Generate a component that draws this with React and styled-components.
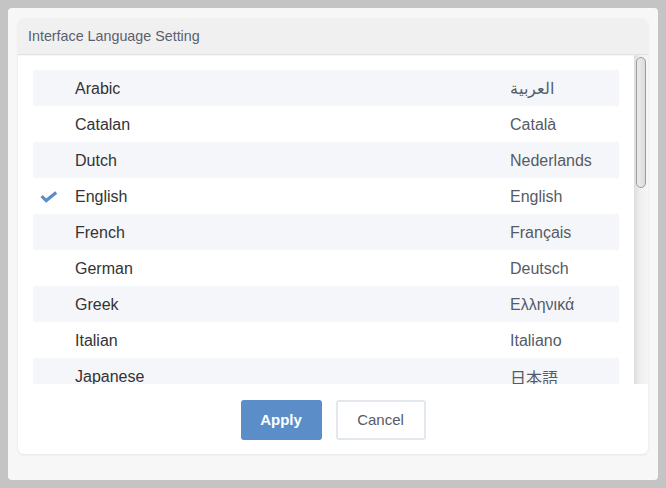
import React from "react";
import styled, { createGlobalStyle } from "styled-components";

const Global = createGlobalStyle`
  html, body { margin: 0; padding: 0; background: #c4c4c4; }
  body { font-family: "Liberation Sans", Arial, "Noto Sans CJK JP", sans-serif; }
  * { box-sizing: border-box; }
`;

const Panel = styled.div`
  margin: 8px;
  width: 650px;
  height: 472px;
  background: #f7f7f7;
  border-radius: 4px;
  padding: 10px 10px 0 10px;
`;

const Card = styled.div`
  background: #fff;
  border-radius: 6px;
  height: 436px;
  box-shadow: 0 1px 3px rgba(0, 0, 0, 0.08);
  display: flex;
  flex-direction: column;
  overflow: hidden;
`;

const Header = styled.div`
  height: 37px;
  flex: none;
  background: #f0f0f0;
  border-bottom: 1px solid #e0e4e9;
  box-shadow: 0 1px 1px rgba(0, 0, 0, 0.03);
  display: flex;
  align-items: center;
  padding-left: 10px;
  font-size: 14.3px;
  color: #5b606e;
  border-radius: 6px 6px 0 0;
`;

const ListArea = styled.div`
  height: 329px;
  flex: none;
  display: flex;
`;

const List = styled.div`
  flex: 1;
  overflow-y: auto;
  scrollbar-width: none;
  padding: 15px 15px 15px 15px;
  &::-webkit-scrollbar { display: none; }
`;

const ScrollTrack = styled.div`
  width: 14px;
  flex: none;
  padding: 2px;
  background: linear-gradient(to right, #dcdcdc, #eeeeee 40%, #f6f6f6);
`;

const ScrollThumb = styled.div`
  width: 100%;
  border: 1px solid #9c9c9c;
  border-radius: 6px;
  background: linear-gradient(to right, #ececec, #dcdcdc);
`;

const Row = styled.div`
  display: grid;
  grid-template-columns: 42px 1fr 109px;
  align-items: center;
  height: 36px;
  padding-top: 1px;
  font-size: 16px;
  background: ${(p) => (p.$alt ? "#f5f6fa" : "#fff")};
`;

const CheckCell = styled.div`
  display: flex;
  align-items: center;
  padding-left: 7px;
  height: 100%;
`;

const Name = styled.div`
  color: #333;
`;

const Native = styled.div`
  color: #555b66;
`;

const Footer = styled.div`
  flex: 1;
  display: flex;
  justify-content: center;
  align-items: flex-start;
  gap: 14px;
  padding-top: 16px;
`;

const Button = styled.button`
  height: 40px;
  font-family: inherit;
  font-size: 15px;
  border-radius: 3px;
  cursor: pointer;
  padding: 0 0 1px;
  width: ${(p) => (p.$primary ? "81px" : "90px")};
  background: ${(p) => (p.$primary ? "#5b8ec9" : "#fff")};
  color: ${(p) => (p.$primary ? "#fff" : "#555b66")};
  font-weight: ${(p) => (p.$primary ? 700 : 400)};
  border: ${(p) => (p.$primary ? "none" : "2px solid #e3e8ee")};
`;

const languages = [
  ["Arabic", "العربية"],
  ["Catalan", "Català"],
  ["Dutch", "Nederlands"],
  ["English", "English"],
  ["French", "Français"],
  ["German", "Deutsch"],
  ["Greek", "Ελληνικά"],
  ["Italian", "Italiano"],
  ["Japanese", "日本語"],
  ["Korean", "한국어"],
  ["Norwegian", "Norsk"],
  ["Polish", "Polski"],
  ["Portuguese", "Português"],
  ["Russian", "Русский"],
  ["Simplified Chinese", "简体中文"],
  ["Slovak", "Slovenčina"],
  ["Spanish", "Español"],
  ["Swedish", "Svenska"],
  ["Traditional Chinese", "繁體中文"],
  ["Turkish", "Türkçe"],
  ["Ukrainian", "Українська"],
  ["Vietnamese", "Tiếng Việt"],
];

const Check = () => (
  <svg width="18" height="12" viewBox="0 0 18 12">
    <polyline
      points="1.6,5.2 6.2,9.6 16.2,1.4"
      fill="none"
      stroke="#5b8ec9"
      strokeWidth="3.2"
      strokeLinejoin="miter"
    />
  </svg>
);

export default function App() {
  return (
    <>
      <Global />
      <Panel>
        <Card>
          <Header>Interface Language Setting</Header>
          <ListArea>
            <List>
              {languages.map(([name, native], i) => (
                <Row key={name} $alt={i % 2 === 0}>
                  <CheckCell>{name === "English" && <Check />}</CheckCell>
                  <Name>{name}</Name>
                  <Native>{native}</Native>
                </Row>
              ))}
            </List>
            <ScrollTrack>
              <ScrollThumb style={{ height: "131px" }} />
            </ScrollTrack>
          </ListArea>
          <Footer>
            <Button $primary>Apply</Button>
            <Button>Cancel</Button>
          </Footer>
        </Card>
      </Panel>
    </>
  );
}
